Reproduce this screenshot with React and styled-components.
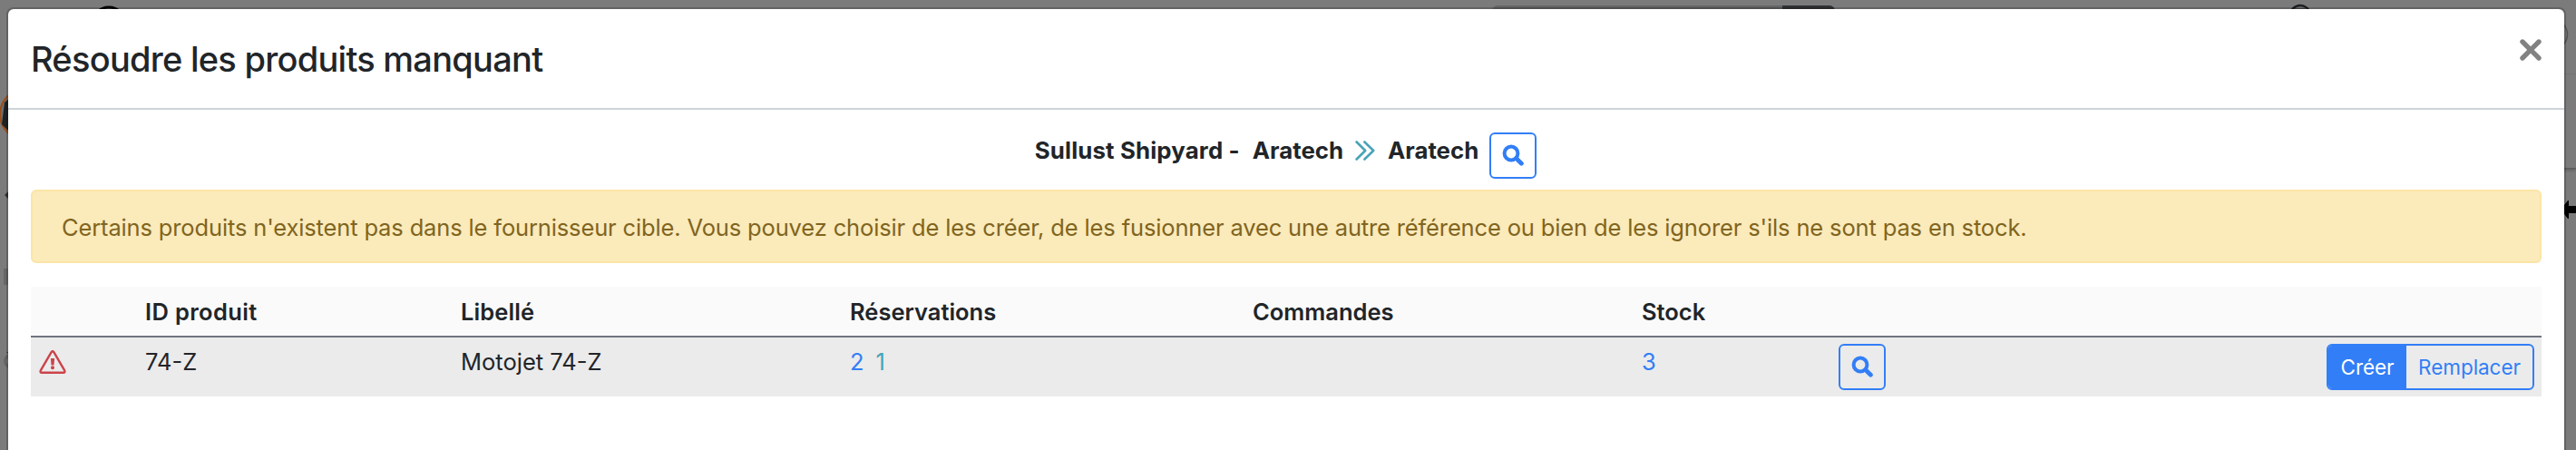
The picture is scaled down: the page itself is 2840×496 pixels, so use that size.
import React from "react";
import styled, { createGlobalStyle } from "styled-components";

const GlobalStyle = createGlobalStyle`
  * { box-sizing: border-box; }
  body {
    margin: 0;
    background: #7b7b7b;
    color: #212529;
    font-family: Inter, "Liberation Sans", sans-serif;
    font-size: 25.5px;
    line-height: 39px;
  }
`;

const Screen = styled.div`
  position: relative;
  height: 496px;
  padding: 8px 11px 0 7px;
  overflow: hidden;
`;

/* Fragments of the page that show round the dialog */
const Backdrop = styled.div`
  position: absolute;
  inset: 0;
`;

const SearchBar = styled.div`
  position: absolute;
  left: 1645px;
  top: 6px;
  width: 378px;
  height: 40px;
  display: flex;
  justify-content: flex-end;
  border-radius: 6px;
  overflow: hidden;
  background: #656565;
`;

const SearchBarButton = styled.div`
  width: 58px;
  background: #303234;
`;

const BackdropDrawing = styled.svg`
  position: absolute;
  left: ${(p) => p.$x}px;
  top: ${(p) => p.$y}px;
  display: block;
`;

const SidePanel = styled.div`
  position: absolute;
  right: 0;
  top: 81px;
  width: 40px;
  height: 105px;
  border-top: 1px solid #747474;
  border-bottom: 1px solid #5a5a5a;
  box-shadow: 0 2px 3px rgba(0, 0, 0, 0.22);
`;

const Dialog = styled.section`
  position: relative;
  height: 520px;
  border: 2px solid rgba(0, 0, 0, 0.2);
  border-radius: 8px;
  background: #fff;
  background-clip: padding-box;
`;

const DialogHeader = styled.header`
  display: flex;
  justify-content: space-between;
  align-items: flex-start;
  height: 111px;
  padding: 32px 25px 0;
  border-bottom: 2px solid #ced4da;
`;

const Title = styled.h1`
  margin: 0;
  font-size: 38px;
  line-height: 46px;
  font-weight: 500;
  letter-spacing: -0.74px;
`;

const CloseButton = styled.button`
  display: flex;
  margin: 1px 0 0;
  padding: 0;
  border: 0;
  background: none;
  color: #828282;
`;

const DialogBody = styled.div`
  padding: 25px 25px 0;
`;

const Transfer = styled.div`
  display: flex;
  justify-content: center;
  align-items: flex-start;
  height: 63px;
  padding-right: 1px;
  font-size: 25.8px;
  font-weight: 700;
  white-space: pre;
`;

const Supplier = styled.span`
  margin-right: ${(p) => p.$gap}px;
  letter-spacing: ${(p) => p.$tracking}px;
`;

const ChevronIcon = styled.svg`
  display: block;
  margin: 9px 14px 0 0;
  color: #4aa3b7;
`;

const IconButton = styled.button`
  display: flex;
  align-items: center;
  justify-content: center;
  width: 52px;
  height: 51px;
  padding: 0 0 1px;
  border: 2px solid #327ef6;
  border-radius: 6px;
  background: none;
  color: #327ef6;
`;

const Alert = styled.div`
  height: 81px;
  padding: 20px 32px;
  border: 2px solid #fbe5a6;
  border-radius: 6px;
  background: #fbeaba;
  color: #80651f;
  letter-spacing: -0.143px;
  white-space: nowrap;
`;

const Table = styled.div`
  margin-top: 26px;
`;

const Row = styled.div`
  display: grid;
  grid-template-columns: 117px 348px 429px 444px 429px 217px 1fr;
`;

const HeadRow = styled(Row)`
  height: 56px;
  padding-top: 1px;
  border-bottom: 2px solid #6e747e;
  background: #fafafa;
  font-weight: 600;
`;

const BodyRow = styled(Row)`
  height: 65px;
  background: #ebebeb;
`;

const Cell = styled.div`
  padding: 7px 8px 0 9px;
  letter-spacing: ${(p) => p.$tracking || 0}px;
`;

const ActionsCell = styled(Cell)`
  display: flex;
  justify-content: space-between;
  align-items: flex-start;
`;

const Count = styled.span`
  margin-right: 13px;
  color: ${(p) => (p.$info ? "#4aa3b7" : "#327ef6")};
`;

const WarningIcon = styled.svg`
  display: block;
  margin-top: 7px;
`;

const ButtonGroup = styled.div`
  display: flex;
  height: 51px;
  border: 2px solid #327ef6;
  border-radius: 6px;
  overflow: hidden;
`;

const GroupButton = styled.button`
  width: ${(p) => p.$width}px;
  padding: 1px 0 0;
  border: 0;
  background: ${(p) => (p.$primary ? "#327ef6" : "transparent")};
  color: ${(p) => (p.$primary ? "#fff" : "#327ef6")};
  font: 400 22.5px/34px Inter, "Liberation Sans", sans-serif;
  letter-spacing: -0.05px;
`;

const SearchIcon = () => (
  <svg width="24" height="24" viewBox="0 0 24 24" fill="none" stroke="currentColor">
    <circle cx="10" cy="10" r="7.4" strokeWidth="4" />
    <path d="M15.8 15.8 21.4 21.2" strokeWidth="4.8" strokeLinecap="round" />
  </svg>
);

const columns = [
  { label: "" },
  { label: "ID produit", tracking: 0.35 },
  { label: "Libellé", tracking: 0.1 },
  { label: "Réservations" },
  { label: "Commandes" },
  { label: "Stock" },
  { label: "" },
];

export default function App() {
  return (
    <Screen>
      <GlobalStyle />
      <Backdrop>
        <SearchBar>
          <SearchBarButton />
        </SearchBar>
        <BackdropDrawing $x={100} $y={5} width="40" height="40" fill="none" stroke="#000">
          <circle cx="20" cy="21" r="18" strokeWidth="3" />
        </BackdropDrawing>
        <BackdropDrawing $x={2520} $y={3} width="32" height="20" fill="none" stroke="#1c1f22">
          <circle cx="16" cy="14" r="11" strokeWidth="2.5" />
          <path d="M10 7.5h12" strokeWidth="2" />
        </BackdropDrawing>
        <BackdropDrawing $x={0} $y={95} width="12" height="62">
          <circle cx="28" cy="31" r="28" fill="#6c6f70" stroke="#9a4e18" strokeWidth="2" />
          <path d="M12 12 5 18 2 42 12 52z" fill="#1d2223" />
        </BackdropDrawing>
        <BackdropDrawing $x={4} $y={211} width="8" height="8">
          <path d="M1 4 5 0v8z" fill="#333" />
        </BackdropDrawing>
        <BackdropDrawing $x={4} $y={296} width="8" height="18">
          <path d="M0 0h8v18H0z" fill="#676767" />
        </BackdropDrawing>
        <BackdropDrawing $x={3} $y={386} width="10" height="22" fill="none">
          <circle cx="9" cy="12" r="6.5" stroke="#666" strokeWidth="3" />
          <path d="M4 3 8 0v3z" fill="#333" />
        </BackdropDrawing>
        <SidePanel />
        <BackdropDrawing $x={2800} $y={20} width="36" height="36" fill="none">
          <circle cx="14" cy="18" r="16.5" stroke="#555050" strokeWidth="1.5" />
        </BackdropDrawing>
        <BackdropDrawing $x={2820} $y={220} width="20" height="22">
          <path d="M3 11 11 1h1v6h8v8h-8v6h-1z" fill="#000" />
        </BackdropDrawing>
      </Backdrop>

      <Dialog>
        <DialogHeader>
          <Title>Résoudre les produits manquant</Title>
          <CloseButton aria-label="Fermer">
            <svg width="24" height="24" fill="none" stroke="currentColor">
              <path d="M3 3 21 21M21 3 3 21" strokeWidth="5.4" strokeLinecap="round" />
            </svg>
          </CloseButton>
        </DialogHeader>

        <DialogBody>
          <Transfer>
            <Supplier $gap={14} $tracking={0.15}>Sullust Shipyard -</Supplier>
            <Supplier $gap={13}>Aratech</Supplier>
            <ChevronIcon width="22" height="22" viewBox="0 0 22 22" fill="none" stroke="currentColor" strokeWidth="2.6" strokeLinecap="round" strokeLinejoin="round">
              <path d="M1.6 1.5 11.2 11 1.6 20.5M10.4 1.5 20.2 11 10.4 20.5" />
            </ChevronIcon>
            <Supplier $gap={12}>Aratech</Supplier>
            <IconButton aria-label="Rechercher">
              <SearchIcon />
            </IconButton>
          </Transfer>

          <Alert>
            Certains produits n'existent pas dans le fournisseur cible. Vous pouvez choisir de les
            créer, de les fusionner avec une autre référence ou bien de les ignorer s'ils ne sont pas
            en stock.
          </Alert>

          <Table>
            <HeadRow>
              {columns.map((column, index) => (
                <Cell key={index} $tracking={column.tracking}>
                  {column.label}
                </Cell>
              ))}
            </HeadRow>
            <BodyRow>
              <Cell>
                <WarningIcon width="30" height="26" viewBox="0 0 30 26" fill="none" stroke="#cb444a">
                  <path d="M13.6 2.2Q15 .4 16.4 2.2L28.2 22.4Q29.1 24.8 26.9 24.8H3.1Q.9 24.8 1.8 22.4Z" strokeWidth="2.4" strokeLinejoin="round" />
                  <path d="M12.9 9h4.2l-.6 7.5h-3z" fill="#cb444a" stroke="none" />
                  <circle cx="15" cy="19.3" r="2" fill="#cb444a" stroke="none" />
                </WarningIcon>
              </Cell>
              <Cell>74-Z</Cell>
              <Cell>Motojet 74-Z</Cell>
              <Cell>
                <Count>2</Count>
                <Count $info>1</Count>
              </Cell>
              <Cell />
              <Cell>
                <Count>3</Count>
              </Cell>
              <ActionsCell>
                <IconButton aria-label="Rechercher">
                  <SearchIcon />
                </IconButton>
                <ButtonGroup>
                  <GroupButton $primary $width={86}>Créer</GroupButton>
                  <GroupButton $width={139}>Remplacer</GroupButton>
                </ButtonGroup>
              </ActionsCell>
            </BodyRow>
          </Table>
        </DialogBody>
      </Dialog>
    </Screen>
  );
}
